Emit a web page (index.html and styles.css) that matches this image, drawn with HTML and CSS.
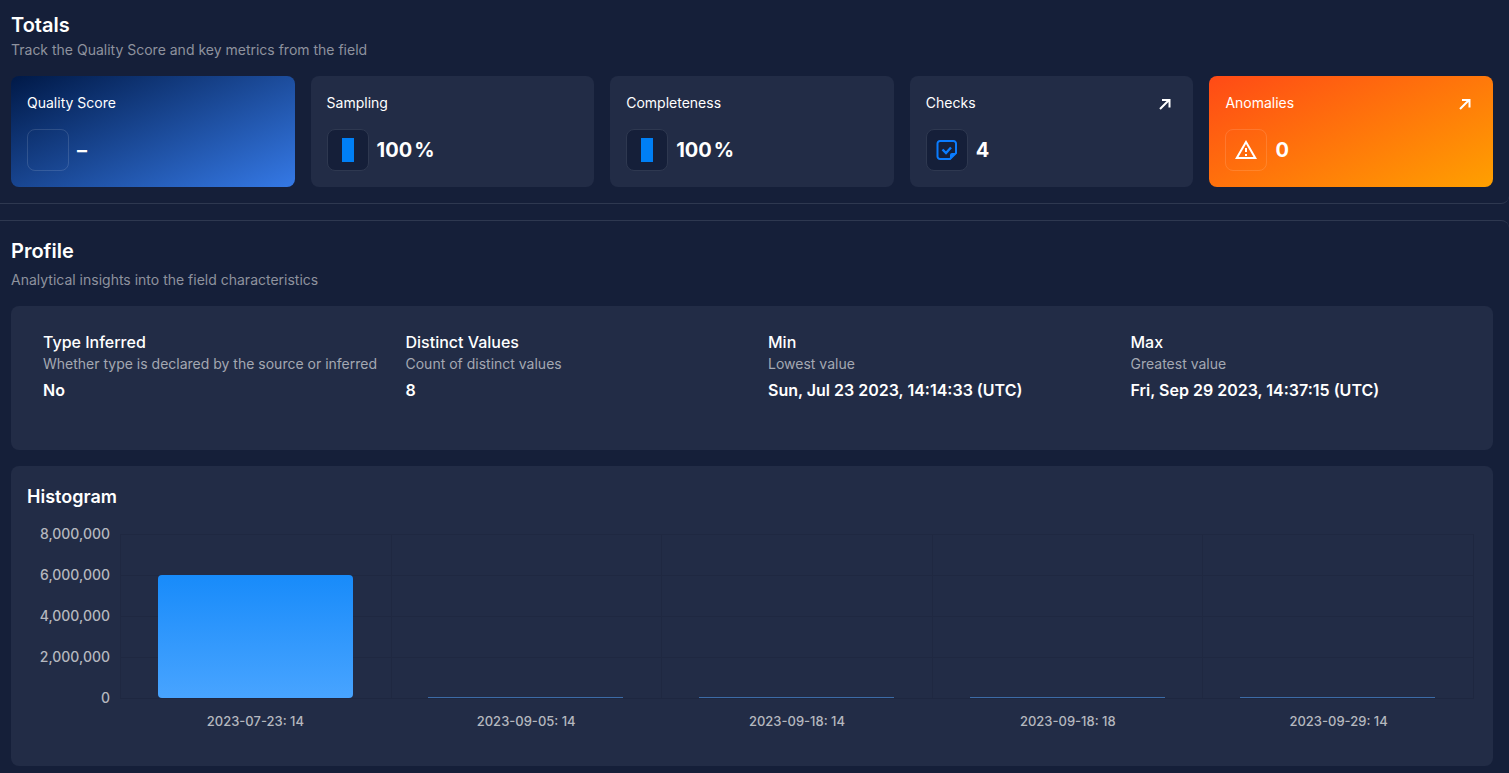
FILE: index.html
```html
<!DOCTYPE html>
<html lang="en">
<head>
<meta charset="utf-8">
<title>Field profile</title>
<link rel="stylesheet" href="styles.css">
</head>
<body>
<main>
  <section class="panel panel-totals" aria-labelledby="totals">
    <h2 class="title" id="totals">Totals</h2>
    <p class="subtitle">Track the Quality Score and key metrics from the field</p>
    <div class="cards">
      <article class="card card-quality">
        <div class="card-head"><h3 class="card-label">Quality Score</h3></div>
        <div class="card-body"><span class="icon-box"></span><span class="value">–</span></div>
      </article>
      <article class="card">
        <div class="card-head"><h3 class="card-label">Sampling</h3></div>
        <div class="card-body"><span class="icon-box"><span class="meter"></span></span><span class="value">100<span class="unit">%</span></span></div>
      </article>
      <article class="card">
        <div class="card-head"><h3 class="card-label">Completeness</h3></div>
        <div class="card-body"><span class="icon-box"><span class="meter"></span></span><span class="value">100<span class="unit">%</span></span></div>
      </article>
      <article class="card">
        <div class="card-head"><h3 class="card-label">Checks</h3>
          <a class="open" href="#" aria-label="Open checks"><svg width="18" height="18" viewBox="0 0 18 18" fill="none" stroke="currentColor" stroke-width="2"><path d="m4 14 9-9M6 5h7.500v7.500"/></svg></a></div>
        <div class="card-body"><span class="icon-box"><svg width="24" height="24" viewBox="0 0 24 24" fill="none" stroke="#0a7cff" stroke-width="2"><path d="M15 21H5a2.500 2.500 0 0 1-2.500-2.500v-13A2.500 2.500 0 0 1 5 3h13.500A2.500 2.500 0 0 1 21 5.500V15z"/><path d="M15 21.500V17a2 2 0 0 1 2-2h4.500z" fill="#0a7cff" stroke="none"/><path d="m7.500 11.500 3.500 3.500 5-5.500" stroke-width="2.400"/></svg></span><span class="value">4</span></div>
      </article>
      <article class="card card-anomalies">
        <div class="card-head"><h3 class="card-label">Anomalies</h3>
          <a class="open" href="#" aria-label="Open anomalies"><svg width="18" height="18" viewBox="0 0 18 18" fill="none" stroke="currentColor" stroke-width="2"><path d="m4 14 9-9M6 5h7.500v7.500"/></svg></a></div>
        <div class="card-body"><span class="icon-box"><svg width="24" height="24" viewBox="0 0 24 24" fill="#fff"><path d="M12 2 1 21h22M12 6l7.530 13H4.470M11 10v4h2v-4m-2 6v2h2v-2"/></svg></span><span class="value">0</span></div>
      </article>
    </div>
  </section>

  <section class="panel panel-profile" aria-labelledby="profile">
    <h2 class="title" id="profile">Profile</h2>
    <p class="subtitle">Analytical insights into the field characteristics</p>
    <dl class="facts">
      <div><dt>Type Inferred</dt><dd class="hint">Whether type is declared by the source or inferred</dd><dd class="fact">No</dd></div>
      <div><dt>Distinct Values</dt><dd class="hint">Count of distinct values</dd><dd class="fact">8</dd></div>
      <div><dt>Min</dt><dd class="hint">Lowest value</dd><dd class="fact">Sun, Jul 23 2023, 14:14:33 (UTC)</dd></div>
      <div><dt>Max</dt><dd class="hint">Greatest value</dd><dd class="fact">Fri, Sep 29 2023, 14:37:15 (UTC)</dd></div>
    </dl>
    <section class="histogram" aria-labelledby="histogram">
      <h3 class="histogram-title" id="histogram">Histogram</h3>
      <div class="chart">
        <div class="y-axis"><span>8,000,000</span><span>6,000,000</span><span>4,000,000</span><span>2,000,000</span><span>0</span></div>
        <div class="plot">
          <div class="slot"><div class="bar" style="height: 75%"></div></div>
          <div class="slot"><div class="bar bar-low"></div></div>
          <div class="slot"><div class="bar bar-low"></div></div>
          <div class="slot"><div class="bar bar-low"></div></div>
          <div class="slot"><div class="bar bar-low"></div></div>
        </div>
        <div class="x-axis"><span>2023-07-23: 14</span><span>2023-09-05: 14</span><span>2023-09-18: 14</span><span>2023-09-18: 18</span><span>2023-09-29: 14</span></div>
      </div>
    </section>
  </section>
</main>
</body>
</html>
```
FILE: styles.css
```css
* { box-sizing: border-box; }
body {
  margin: 0;
  background: #151f39;
  color: #fff;
  font-family: Inter, "Liberation Sans", sans-serif;
  font-size: 14px;
}
h2, h3, p, dl, dd { margin: 0; }

.panel {
  padding: 12px 16px 16px 11px;
  border: 0 solid #2e3850;
}
.panel-totals {
  border-bottom-width: 1px;
  border-bottom-right-radius: 8px;
}
.panel-profile {
  margin-top: 16px;
  padding-top: 17px;
  padding-bottom: 7px;
  border-top-width: 1px;
  border-top-right-radius: 8px;
}
.title { font-size: 20px; line-height: 26px; font-weight: 600; }
.subtitle { margin-top: 2px; line-height: 20px; color: #8e929e; }
.panel-profile .subtitle { margin-top: 6px; }

.cards {
  display: grid;
  grid-template-columns: repeat(5, 1fr);
  gap: 16px;
  margin-top: 16px;
}
.card { padding: 16px; border-radius: 8px; background: #222c46; }
.card-quality { background: linear-gradient(155deg, #001947, #3579e6); }
.card-anomalies { background: linear-gradient(155deg, #ff4a16, #ffa000); }
.card-head { display: flex; justify-content: space-between; height: 24px; }
.card-label { font-size: 14px; line-height: 22px; font-weight: 400; }
.open { display: grid; place-items: center; width: 24px; color: #fff; }
.card-body { display: flex; align-items: center; gap: 8px; margin-top: 13px; }
.icon-box {
  display: grid;
  place-items: center;
  width: 42px;
  height: 42px;
  border: 1px solid #2e3850;
  border-radius: 8px;
  background: #151f39;
}
.card-quality .icon-box, .card-anomalies .icon-box {
  border-color: rgba(255, 255, 255, .13);
  background: none;
}
.meter { width: 12px; height: 24px; background: #007ff5; }
.value { font-size: 20px; line-height: 28px; font-weight: 700; }
.unit { margin-left: 2px; }

.facts {
  display: grid;
  grid-template-columns: repeat(4, 1fr);
  margin-top: 16px;
  padding: 24px 0 48px 32px;
  border-radius: 8px;
  background: #222c46;
}
dt { font-size: 16px; line-height: 24px; font-weight: 500; }
.hint { line-height: 20px; color: #a4a8b2; }
.fact { margin-top: 4px; font-size: 16px; line-height: 24px; font-weight: 600; }

.histogram {
  margin-top: 16px;
  padding: 16px 19px 35px 16px;
  border-radius: 8px;
  background: #222c46;
}
.histogram-title { font-size: 18px; line-height: 30px; font-weight: 600; }
.chart {
  display: grid;
  grid-template-columns: 83px 1fr;
  margin-top: 1px;
  font-weight: 500;
  color: #b5b8bf;
}
.y-axis {
  display: grid;
  margin-bottom: -7px;
  text-align: right;
  line-height: 41px;
}
.plot {
  display: grid;
  grid-template-columns: repeat(5, 1fr);
  height: 165px;
  margin: 21px 0 0 10px;
  border: 1px solid #1e2740;
  border-width: 0 1px 1px 0;
  background: repeating-linear-gradient(#1f2841 0 1px, transparent 1px 41px);
}
.slot {
  display: flex;
  align-items: flex-end;
  justify-content: center;
  box-shadow: inset 1px 0 #1f2841;
}
.bar { width: 72%; border-radius: 4px; background: linear-gradient(#188bfa, #48a4ff); }
.bar-low { height: 1px; border-radius: 0; background: #3c6ba6; }
.x-axis {
  grid-column: 2;
  display: grid;
  grid-template-columns: repeat(5, 1fr);
  margin-left: 10px;
  text-align: center;
  font-size: 13px;
  line-height: 20px;
}
```
